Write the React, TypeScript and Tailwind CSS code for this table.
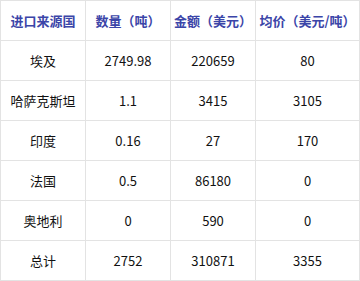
import React from "react";

const header = ["进口来源国", "数量（吨）", "金额（美元）", "均价（美元/吨）"];
const rows = [
  ["埃及", "2749.98", "220659", "80"],
  ["哈萨克斯坦", "1.1", "3415", "3105"],
  ["印度", "0.16", "27", "170"],
  ["法国", "0.5", "86180", "0"],
  ["奥地利", "0", "590", "0"],
  ["总计", "2752", "310871", "3355"],
];

const widths = ["w-[85px]", "w-[85px]", "w-[85px]", "w-[104px]"];

export default function App() {
  return (
    <div
      className="w-[360px] h-[281px] bg-white border-l border-t border-[#e3e3e3] text-[13px]"
      style={{ fontFamily: '"Noto Sans CJK SC", "Noto Sans", sans-serif' }}
    >
      <div className="flex">
        {header.map((h, i) => (
          <div
            key={i}
            className={`${widths[i]} h-[40px] border-r border-b border-[#e3e3e3] flex items-center justify-center font-bold text-[#3b45a8] whitespace-nowrap`}
          >
            {h}
          </div>
        ))}
      </div>
      {rows.map((r, ri) => (
        <div key={ri} className="flex">
          {r.map((c, ci) => (
            <div
              key={ci}
              className={`${widths[ci]} h-[40px] border-r border-b border-[#e3e3e3] flex items-center justify-center text-[#111] whitespace-nowrap`}
            >
              {c}
            </div>
          ))}
        </div>
      ))}
    </div>
  );
}
